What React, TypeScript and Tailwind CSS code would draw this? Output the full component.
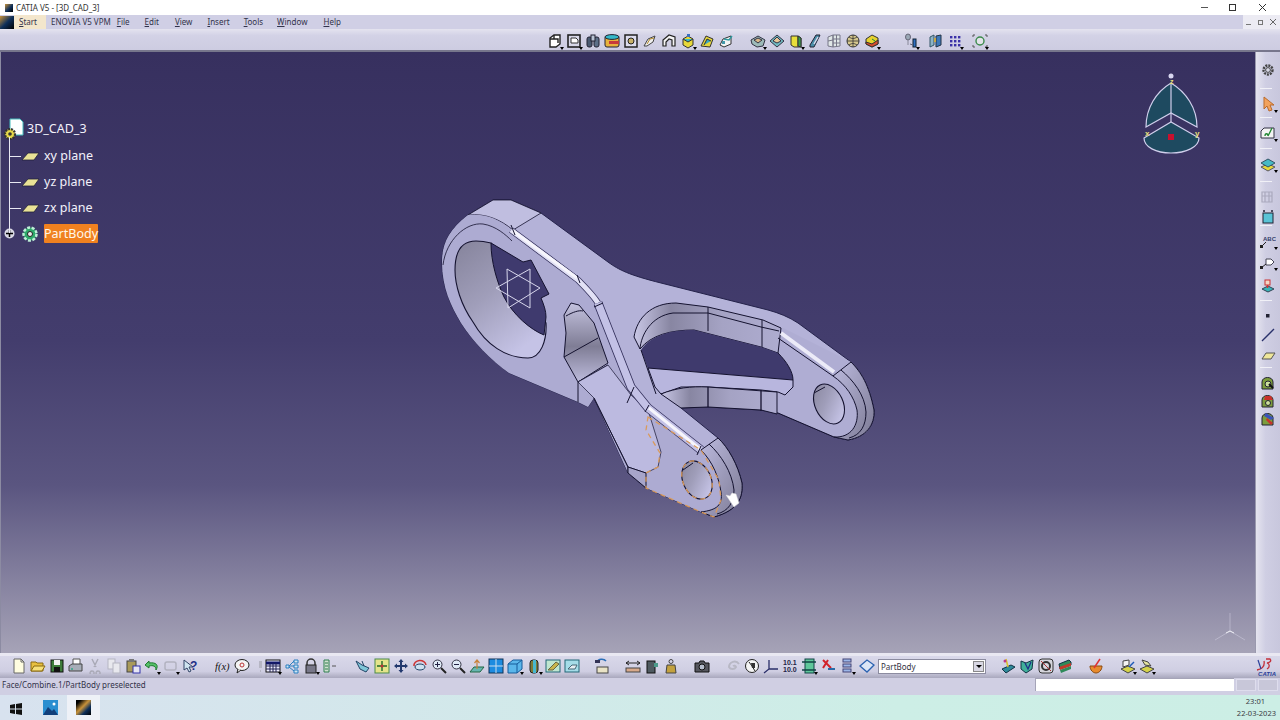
import type { ReactNode } from 'react'

const ui = { fontFamily: '"Noto Sans", "Open Sans", sans-serif' }

const icons: Record<string, ReactNode> = {
  pad: <><path d="M3 5l4-3h6v9l-4 3H3z" fill="#fff" stroke="#222" strokeWidth="1.4"/><path d="M7 2v4H3M7 6l4 0v4" fill="none" stroke="#222" strokeWidth="1.4"/></>,
  pocket: <><rect x="2" y="2" width="12" height="12" fill="#d8d8e8" stroke="#222" strokeWidth="1.6"/><path d="M5 5h5l2 2v3H5z" fill="#fff" stroke="#333"/></>,
  shaft: <><rect x="2" y="4" width="5" height="10" rx="2" fill="#4a5a70" stroke="#223"/><rect x="9" y="4" width="5" height="10" rx="2" fill="#5d7088" stroke="#223"/><rect x="6" y="2" width="4" height="6" fill="#b9c4d4" stroke="#223"/></>,
  groove: <><rect x="1" y="3" width="14" height="11" rx="2" fill="#e8b23c" stroke="#223"/><ellipse cx="8" cy="4" rx="7" ry="2.4" fill="#35b8c8" stroke="#223"/><path d="M5 8h10v3H5z" fill="#c73a3a"/></>,
  hole: <><rect x="2" y="2" width="12" height="12" fill="#dde" stroke="#222" strokeWidth="1.5"/><circle cx="8" cy="8" r="3" fill="#c9b26a" stroke="#222"/></>,
  rib: <><path d="M2 13l4-7 7-3-2 6-6 4z" fill="#eee" stroke="#444"/><path d="M5 11l3-5 4-1" fill="none" stroke="#b38b2a"/></>,
  slot: <><path d="M2 13V7l6-5 6 2v9h-3V7L8 6 5 9v4z" fill="#f4f4f4" stroke="#222" strokeWidth="1.2"/></>,
  multi: <><path d="M3 6l5-3 5 3v6l-5 3-5-3z" fill="#e7d83a" stroke="#333"/><path d="M3 6l5 3 5-3" fill="#37b8c4" stroke="#333"/><rect x="7" y="1" width="3" height="3" fill="#3a70c0"/></>,
  loft: <><path d="M2 13L7 3l7 3-3 8z" fill="#e6d63b" stroke="#333"/><path d="M5 12l3-6 4 2" fill="#38a8c0" stroke="#333"/></>,
  solid: <><path d="M2 12l3-6 8-3v8l-7 3z" fill="#f4f4f4" stroke="#333"/><path d="M6 6l5 1 3-4" fill="none" stroke="#2f9aa0" strokeWidth="1.4"/><rect x="4" y="8" width="3" height="3" fill="#49a"/></>,
  edge: <><path d="M1 7l7-4 7 4-2 6-6 1-5-3z" fill="#9dbab8" stroke="#334"/><path d="M4 7l4-2 4 2-4 3z" fill="#d9b98a" stroke="#334"/></>,
  face: <><path d="M1 8l7-6 7 6-7 6z" fill="#6fb8c0" stroke="#334"/><path d="M4 8l4-4 4 4-4 2z" fill="#e6c79a" stroke="#334"/></>,
  thick: <><path d="M3 3h7l3 2v9H6l-3-2z" fill="#e7de3a" stroke="#333"/><path d="M10 3v11" stroke="#333"/><path d="M10 3l3 2v9l-3-1z" fill="#3a9c4a" stroke="#333"/></>,
  shell: <><path d="M3 12L9 2h4l-6 12H3z" fill="#4a8ea8" stroke="#223"/><path d="M7 11l4-7" stroke="#dde" strokeWidth="1.4"/></>,
  grid3: <><path d="M2 4l5-2v12l-5-1zM7 2h7v11l-7 1z" fill="#dfe6e6" stroke="#778"/><path d="M7 6h7M7 10h7M10.500 2v11M2 8l5-1" stroke="#778" fill="none"/></>,
  sphere: <><circle cx="8" cy="8" r="6" fill="#d7c98d" stroke="#333"/><path d="M2 8h12M8 2v12M4 4c3 2 5 2 8 0M4 12c3-2 5-2 8 0" stroke="#333" fill="none" strokeWidth=".8"/></>,
  box: <><path d="M2 6l6-4 6 3v6l-6 3-6-3z" fill="#e6d12e" stroke="#333"/><path d="M2 9l6 2 6-4v4l-6 3-6-3z" fill="#d94c2c" stroke="#333"/><path d="M8 6l3 2" stroke="#1c8a3c"/></>,
  analyze: <><ellipse cx="5" cy="4" rx="2.500" ry="3" fill="#9aa8b5" stroke="#667"/><path d="M5 7v5" stroke="#889"/><rect x="10" y="6" width="3" height="8" fill="#2f6fc0" stroke="#123"/><path d="M7 11l3 1" stroke="#667"/></>,
  book: <><path d="M2 4l4-2v10l-4 2z" fill="#8db4c7" stroke="#356"/><path d="M8 3l5-1v10l-5 2z" fill="#3e78b8" stroke="#234"/><path d="M6 5h2v4H6z" fill="#c9a642"/></>,
  dots: <><g fill="#3b32a8">{[2, 6, 10].map(y => [2, 6, 10].map(x => <rect key={`${x}-${y}`} x={x + 1} y={y + 1} width="2.400" height="2.400"/>))}</g></>,
  target: <><path d="M3 2H1v2M13 2h2v2M3 14H1v-2M13 14h2v-2" fill="none" stroke="#555"/><circle cx="8" cy="8" r="4" fill="#e3e3ea" stroke="#3a8a4a" strokeWidth="1.4"/></>,
  gear: <><circle cx="8" cy="8" r="4.500" fill="none" stroke="#444" strokeWidth="2.400" strokeDasharray="2 1"/><circle cx="8" cy="8" r="2.400" fill="#d8d8e6" stroke="#444"/></>,
  cursor: <path d="M4 1v12l3-3 2 5 3-1-2-5h4z" fill="#f2a25c" stroke="#b96a2c"/>,
  sketch: <><path d="M1 6l3-3h10v10H1z" fill="#f4f4f4" stroke="#334"/><path d="M5 11c0-3 3-3 3 0M8 11l4-8" fill="none" stroke="#283" strokeWidth="1.300"/></>,
  layers: <><path d="M1 11l7-3 7 3-7 4z" fill="#e7d83a" stroke="#556"/><path d="M1 7l7-4 7 4-7 4z" fill="#47bac6" stroke="#356"/></>,
  ghost: <path d="M2 3h10v10H2zM5 3v10M2 7h10M9 3v10" fill="none" stroke="#aaa9bd" strokeWidth="1.200"/>,
  card: <><rect x="3" y="4" width="10" height="10" fill="#59c3d6" stroke="#223"/><path d="M3 2h2M11 2h2" stroke="#223" strokeWidth="1.400"/></>,
  abc: <><text x="3" y="8" fontSize="6" fontWeight="700" fill="#33406a" fontFamily="Liberation Sans">ABC</text><path d="M1 14l5-5" stroke="#222"/><rect x="0" y="12" width="3" height="3" fill="#222"/></>,
  tag: <><path d="M6 5h5l3 3-3 3H6z" fill="#fff" stroke="#445"/><path d="M1 14l5-4" stroke="#222"/><rect x="0" y="12" width="3" height="3" fill="#222"/></>,
  stamp: <><path d="M2 11l6-3 6 3-6 3z" fill="#39b4b8" stroke="#345"/><rect x="5" y="2" width="5" height="5" fill="#f3d7c6" stroke="#c33"/><path d="M7.500 7v3" stroke="#c33" strokeWidth="1.500"/></>,
  point: <rect x="6" y="6" width="3.500" height="3.500" fill="#223"/>,
  line: <path d="M2 14L14 2" stroke="#29306a" strokeWidth="1.300"/>,
  plane: <path d="M2 13l4-6h9l-4 6z" fill="#eee69a" stroke="#555"/>,
  wiz1: <><path d="M2 7c0-6 11-6 11 0v7H2z" fill="#7c9c3c" stroke="#223"/><circle cx="8" cy="9" r="3" fill="#cde09c" stroke="#223"/><path d="M9 9l4 4" stroke="#111" strokeWidth="2"/></>,
  wiz2: <><path d="M2 7c0-6 11-6 11 0v7H2z" fill="#7c9c3c" stroke="#223"/><path d="M5 3h6l2 4H4z" fill="#c8322c"/><circle cx="8" cy="10" r="2.500" fill="#cde09c" stroke="#223"/></>,
  wiz3: <><path d="M2 7c0-6 11-6 11 0v7H2z" fill="#7c9c3c" stroke="#223"/><path d="M6 2l8 5-3 2-7-4z" fill="#3b53b8"/><path d="M7 7l6 5-2 2-5-5z" fill="#c8322c"/></>,
  newf: <><path d="M3 1h7l3 3v11H3z" fill="#fffde0" stroke="#666"/><path d="M10 1v3h3" fill="none" stroke="#666"/></>,
  open: <><path d="M1 13V4h5l1 1h6v8z" fill="#e8c040" stroke="#8a6a10"/><path d="M1 13l3-5h11l-3 5z" fill="#f6e07a" stroke="#8a6a10"/></>,
  save: <><rect x="2" y="2" width="12" height="12" fill="#3d7c3a" stroke="#111"/><rect x="5" y="2" width="6" height="5" fill="#f1f1f1"/><rect x="5" y="9" width="6" height="5" fill="#111"/></>,
  print: <><path d="M5 1h7v6H5z" fill="#fff" stroke="#555"/><path d="M1 8l3-2h10v7H1z" fill="#a7adb8" stroke="#444"/><circle cx="4" cy="11" r="1" fill="#3a8"/></>,
  cut: <path d="M5 1l4 8M11 1L7 9M5 13a2 2 0 1 0 .1 0M11 13a2 2 0 1 0 .1 0" stroke="#a9a9b6" fill="none" strokeWidth="1.400"/>,
  copy: <><rect x="2" y="1" width="7" height="10" fill="#e8e8ee" stroke="#b5b5c2"/><rect x="7" y="5" width="7" height="10" fill="#e8e8ee" stroke="#b5b5c2"/></>,
  paste: <><rect x="2" y="3" width="9" height="11" fill="#a99a5a" stroke="#444"/><rect x="4" y="1" width="5" height="3" fill="#777"/><rect x="8" y="8" width="7" height="7" fill="#e6e6f4" stroke="#33a"/></>,
  undo: <path d="M5 3L1 7l4 3V8c4-1 7 0 7 4 3-5 0-8-7-7z" fill="#55c06a" stroke="#1e7a30"/>,
  redo: <rect x="2" y="4" width="11" height="8" rx="2" fill="none" stroke="#b2b2c0" strokeWidth="1.500"/>,
  help: <><path d="M2 2v10l3-2 2 4 2-1-2-4h4z" fill="#cfe4f0" stroke="#346"/><text x="8" y="12" fontSize="12" fontWeight="700" fill="#1d2f88" fontFamily="Liberation Sans">?</text></>,
  fx: <text x="0" y="12" fontSize="10.500" fontFamily="Liberation Serif" fontStyle="italic" fill="#111">f(x)</text>,
  bubble: <><ellipse cx="8" cy="7" rx="7" ry="5.500" fill="#f4f4f4" stroke="#222"/><path d="M4 11l-1 4 4-3" fill="#f4f4f4" stroke="#222"/><circle cx="8" cy="7" r="2" fill="none" stroke="#b33"/></>,
  bulb: <path d="M6 3h3v7H6zM7 12h1v2H7z" fill="#b6b6c4"/>,
  table: <><rect x="1" y="2" width="14" height="12" fill="#eef" stroke="#111"/><path d="M1 5h14" stroke="#11166a" strokeWidth="3"/><path d="M1 8h14M1 11h14M5 5v9M8 5v9M11 5v9" stroke="#225"/></>,
  tree: <path d="M2 7h3v3H2zM10 2h4v3h-4zM10 7h4v3h-4zM10 12h4v3h-4zM5 8l5-5M5 8h5M5 9l5 4" fill="#cfe6f3" stroke="#2a7fc0"/>,
  lock: <><path d="M4 7V5a4 4 0 0 1 8 0v2" fill="none" stroke="#333" strokeWidth="1.500"/><rect x="3" y="7" width="10" height="8" fill="#778" stroke="#222"/></>,
  param: <><path d="M2 2h5v12H2z" fill="#cfe0cf" stroke="#2f7f4f"/><path d="M3 5h3M3 8h3M3 11h3" stroke="#2f7f4f"/><path d="M10 8h4" stroke="#555"/></>,
  fly: <><path d="M1 3l6 4 7 3-3 4-6-3z" fill="#7fc6d8" stroke="#246"/><path d="M7 3l2 5" stroke="#246"/></>,
  fit: <><rect x="1" y="1" width="14" height="14" fill="#e4e48a" stroke="#4a8a4a"/><path d="M8 3v10M3 8h10" stroke="#1f6a2a" strokeWidth="1.400"/><circle cx="8" cy="8" r="1.500" fill="#b33"/></>,
  pan: <path d="M8 1l2.500 3H9v3h3V5.500L15 8l-3 2.500V9H9v3h1.500L8 15l-2.500-3H7V9H4v1.500L1 8l3-2.500V7h3V4H5.500z" fill="#23396e"/>,
  rotate: <><path d="M2 8a6 5 0 0 1 12-1" fill="none" stroke="#c33" strokeWidth="1.500"/><ellipse cx="8" cy="9" rx="5" ry="3" fill="#cfe2f2" stroke="#246"/></>,
  zin: <><circle cx="6.500" cy="6.500" r="4.500" fill="#dfeaf6" stroke="#334"/><path d="M10 10l5 5" stroke="#222" strokeWidth="2"/><path d="M4 6.500h5M6.500 4v5" stroke="#224"/></>,
  zout: <><circle cx="6.500" cy="6.500" r="4.500" fill="#dfeaf6" stroke="#334"/><path d="M10 10l5 5" stroke="#222" strokeWidth="2"/><path d="M4 6.500h5" stroke="#224"/></>,
  normal: <><path d="M1 14l4-5h10l-4 5z" fill="#67b6b0" stroke="#264"/><path d="M8 11V2M5.500 5L8 2l2.500 3" fill="none" stroke="#c8823a" strokeWidth="1.200"/></>,
  quad: <><rect x="1" y="1" width="14" height="14" fill="#1d8be0" stroke="#135"/><path d="M8 1v14M1 8h14" stroke="#cde"/></>,
  cube: <><path d="M1 6l5-4h9v9l-5 4H1z" fill="#5ab6ea" stroke="#155b9a"/><path d="M1 6h9v9M10 6l5-4" fill="none" stroke="#155b9a"/></>,
  shade: <><rect x="4" y="2" width="8" height="13" rx="3" fill="#7d7a3a" stroke="#222"/><rect x="7" y="2" width="3" height="13" fill="#47b8d0"/></>,
  sq1: <><rect x="1" y="2" width="14" height="12" fill="#bfe6d0" stroke="#267"/><path d="M3 12l8-8 3 2-6 6z" fill="#c8b44a" stroke="#664"/></>,
  sq2: <><rect x="1" y="2" width="14" height="12" fill="#a5dce8" stroke="#267"/><path d="M4 11l4-4h5l-2 4z" fill="#e6eef2" stroke="#467"/></>,
  swap: <><path d="M3 4a5 4 0 0 1 9-1" fill="none" stroke="#2b6fb8" strokeWidth="1.500"/><rect x="1" y="2" width="5" height="3" fill="#335"/><rect x="3" y="9" width="11" height="6" fill="#e9e3c6" stroke="#444"/></>,
  measure: <><path d="M1 5h14M1 5l3-2M1 5l3 2M15 5l-3-2M15 5l-3 2" fill="none" stroke="#222"/><rect x="1" y="10" width="14" height="4" fill="#d8a98a" stroke="#444"/></>,
  inertia: <><rect x="3" y="3" width="8" height="12" fill="#4f5a60" stroke="#111"/><rect x="10" y="5" width="4" height="4" fill="#4b9a8a"/></>,
  mass: <><circle cx="8" cy="3.500" r="2" fill="none" stroke="#444"/><path d="M4 7h8l1 8H3z" fill="#c3a13e" stroke="#444"/></>,
  camera: <><path d="M1 5h4l1-2h4l1 2h4v9H1z" fill="#55565e" stroke="#111"/><circle cx="8" cy="9" r="3" fill="#b5bccb" stroke="#111"/></>,
  spiral: <path d="M8 8a2 2 0 0 1 3 1 4 4 0 0 1-7 0 5.500 5.500 0 0 1 10-3" fill="none" stroke="#b8b8c5" strokeWidth="2"/>,
  globe: <><circle cx="8" cy="8" r="6.500" fill="#f4f4f4" stroke="#222"/><path d="M5 4l3 4 3 5" fill="none" stroke="#222"/><path d="M7 5h4v5H8z" fill="#333"/></>,
  axis: <path d="M6 2v9l-5 4M6 11h9" fill="none" stroke="#2a2f6a" strokeWidth="1.300"/>,
  nums: <text x="1" y="7" fontSize="7" fontWeight="700" fontFamily="Liberation Sans" fill="#224">10.1<tspan x="1" y="14">10.0</tspan></text>,
  frame: <><rect x="4" y="1" width="9" height="14" fill="#5fc79b" stroke="#144"/><path d="M1 4h14M1 12h14" stroke="#144" strokeWidth="1.400"/></>,
  redx: <><path d="M3 2l8 8M8 2L3 10" stroke="#d2222a" strokeWidth="2"/><path d="M8 11h7" stroke="#2a6aa8" strokeWidth="2"/></>,
  stack: <><rect x="4" y="1" width="8" height="3" fill="#9bb6e8" stroke="#447"/><rect x="4" y="6" width="8" height="3" fill="#9bb6e8" stroke="#447"/><rect x="4" y="11" width="8" height="3" fill="#9bb6e8" stroke="#447"/></>,
  diamond: <path d="M1 8l7-6 7 5-7 7z" fill="#dbe6f6" stroke="#2b62b0" strokeWidth="1.300"/>,
  tool1: <><path d="M2 11l9-4 4 2-9 6z" fill="#2f8a9a" stroke="#134"/><path d="M6 1l2 8" stroke="#d9c22a" strokeWidth="1.500"/><circle cx="5" cy="3" r="1.500" fill="#c03a8a"/></>,
  tool2: <><path d="M2 3l5 2 7-3-1 9-6 4-5-4z" fill="#3faf9a" stroke="#134"/><path d="M6 5l3 6 3-7" fill="none" stroke="#1d2f88" strokeWidth="1.300"/></>,
  tool3: <><rect x="1" y="1" width="14" height="14" rx="3" fill="#d5d5dc" stroke="#333"/><circle cx="8" cy="8" r="4" fill="none" stroke="#333" strokeWidth="2"/><path d="M3 3l10 10" stroke="#a33"/></>,
  tool4: <><path d="M2 6l10-4 2 2v3L3 11z" fill="#2f8a5a" stroke="#134"/><path d="M2 9l12-4v3L3 12z" fill="#c03a2a"/><path d="M3 12l11-4v3L4 15z" fill="#2f8a5a"/></>,
  bowl: <><path d="M2 8h12c0 4-3 7-6 7s-6-3-6-7z" fill="#e88a2c" stroke="#8a4a10"/><path d="M6 10l6-9" stroke="#d33" strokeWidth="1.500"/></>,
  cad1: <><path d="M1 11l7-3 7 3-7 4z" fill="#d4d24a" stroke="#444"/><path d="M3 9V3l6-1v5z" fill="#f4f4f4" stroke="#444"/><path d="M9 9l5-5" stroke="#1d5ab8" strokeWidth="1.500"/></>,
  cad2: <><path d="M1 11l7-3 7 3-7 4z" fill="#d4d24a" stroke="#444"/><path d="M3 2l6 2 3 4-6-1z" fill="#e4e4a0" stroke="#444"/></>,
}

type Item = { n: string; arrow?: boolean; gap?: string }

function Btn({ n, arrow, gap = '' }: Item) {
  return (
    <div className={`relative w-[19px] h-[18px] shrink-0 flex items-center justify-center ${gap}`}>
      <svg width="16" height="16" viewBox="0 0 16 16">{icons[n]}</svg>
      {arrow && <span className="absolute right-[0px] bottom-[0px] w-0 h-0 border-x-[2.5px] border-x-transparent border-t-[3px] border-t-black" />}
    </div>
  )
}

const topBar: Item[] = [
  { n: 'pad', arrow: true }, { n: 'pocket', arrow: true }, { n: 'shaft' }, { n: 'groove' }, { n: 'hole' }, { n: 'rib' }, { n: 'slot' }, { n: 'multi', arrow: true }, { n: 'loft' }, { n: 'solid' },
  { n: 'edge', arrow: true, gap: 'ml-[13px]' }, { n: 'face' }, { n: 'thick', arrow: true }, { n: 'shell' }, { n: 'grid3' }, { n: 'sphere' }, { n: 'box', arrow: true },
  { n: 'analyze', arrow: true, gap: 'ml-[20px]' }, { n: 'book', gap: 'ml-[6px]' }, { n: 'dots', arrow: true }, { n: 'target', arrow: true, gap: 'ml-[6px]' },
]

const bottomBar: Item[] = [
  { n: 'newf' }, { n: 'open' }, { n: 'save' }, { n: 'print' }, { n: 'cut' }, { n: 'copy' }, { n: 'paste' }, { n: 'undo', arrow: true }, { n: 'redo', arrow: true }, { n: 'help' },
  { n: 'fx', gap: 'ml-[14px]' }, { n: 'bubble' }, { n: 'bulb' }, { n: 'table', arrow: true, gap: 'ml-[-7px]' }, { n: 'tree' }, { n: 'lock', arrow: true }, { n: 'param' },
  { n: 'fly', gap: 'ml-[14px]' }, { n: 'fit' }, { n: 'pan' }, { n: 'rotate' }, { n: 'zin' }, { n: 'zout' }, { n: 'normal' }, { n: 'quad' }, { n: 'cube', arrow: true }, { n: 'shade', arrow: true }, { n: 'sq1' }, { n: 'sq2' },
  { n: 'swap', gap: 'ml-[11px]' }, { n: 'measure', gap: 'ml-[12px]' }, { n: 'inertia' }, { n: 'mass' }, { n: 'camera', gap: 'ml-[12px]' },
  { n: 'spiral', gap: 'ml-[12px]' }, { n: 'globe' }, { n: 'axis' }, { n: 'nums' }, { n: 'frame', arrow: true }, { n: 'redx' }, { n: 'stack', arrow: true },
]

const rightBar: { n: string; mt: string; arrow?: boolean; sep?: boolean }[] = [
  { n: 'gear', mt: 'mt-[9px]' }, { n: 'cursor', mt: 'mt-[16px]', arrow: true, sep: true }, { n: 'sketch', mt: 'mt-[11px]', arrow: true, sep: true },
  { n: 'layers', mt: 'mt-[13px]', arrow: true, sep: true }, { n: 'ghost', mt: 'mt-[15px]', sep: true }, { n: 'card', mt: 'mt-[2px]' },
  { n: 'abc', mt: 'mt-[6px]', arrow: true, sep: true }, { n: 'tag', mt: 'mt-[3px]', arrow: true }, { n: 'stamp', mt: 'mt-[6px]' },
  { n: 'point', mt: 'mt-[12px]', sep: true }, { n: 'line', mt: 'mt-[1px]' }, { n: 'plane', mt: 'mt-[1px]' },
  { n: 'wiz1', mt: 'mt-[11px]', sep: true }, { n: 'wiz2', mt: 'mt-[0px]' }, { n: 'wiz3', mt: 'mt-[0px]' },
]

function Gizmo() {
  return (
    <svg className="absolute right-[52px] top-[18px]" width="62" height="88" viewBox="1141 70 62 88">
      <g stroke="#d0cfec" strokeWidth="1.200">
        <path d="M1171 83C1156 92 1146 108 1146 127L1171 113L1197 127C1197 108 1186 92 1171 83Z" fill="#1e4a60" />
        <path d="M1144 138L1171 122L1199 138C1199 147 1186 153 1171 153C1156 153 1144 147 1144 138Z" fill="#1e4a60" />
        <path d="M1171 83V122" fill="none" />
      </g>
      <circle cx="1171" cy="76" r="2.500" fill="#d8d7f0" />
      <rect x="1168" y="134" width="6" height="6" fill="#c8102e" />
      <text x="1170" y="84" fontSize="7" fontWeight="700" fill="#e8e07a" fontFamily="Liberation Sans">z</text>
      <text x="1145" y="136" fontSize="8" fontWeight="700" fill="#e8e07a" fontFamily="Liberation Sans">x</text>
      <text x="1195" y="136" fontSize="8" fontWeight="700" fill="#e8e07a" fontFamily="Liberation Sans">y</text>
    </svg>
  )
}

const ink = '#14122f'
const flank = 'M700 512L645 488L627 473L593 398L587 407L577 402L508 373C490 360 472 342 460 323C450 306 441 288 441 262'

function Part() {
  return (
    <svg className="absolute left-0 top-0" width="1255" height="600" viewBox="0 52 1255 600">
      <defs>
        <linearGradient id="hole" x1="0" y1="0" x2="0.6" y2="1">
          <stop offset="0" stopColor="#85839b" /><stop offset="0.5" stopColor="#a09eba" /><stop offset="1" stopColor="#c5c3e6" />
        </linearGradient>
        <linearGradient id="pocket" x1="0" y1="0" x2="0" y2="1">
          <stop offset="0" stopColor="#c4c2df" /><stop offset="0.55" stopColor="#7f7d95" /><stop offset="1" stopColor="#bdbbdc" />
        </linearGradient>
        <linearGradient id="wall" x1="0" y1="0" x2="1" y2="0">
          <stop offset="0" stopColor="#c9c7e6" /><stop offset="0.25" stopColor="#8886a2" /><stop offset="0.6" stopColor="#a5a3c4" /><stop offset="1" stopColor="#aeacd0" />
        </linearGradient>
        <linearGradient id="end" x1="0" y1="0" x2="1" y2="1">
          <stop offset="0" stopColor="#bcbade" /><stop offset="1" stopColor="#7c7a94" />
        </linearGradient>
      </defs>
      {/* body */}
      <path
        d={`M441 262C441 245 447 230 467 215L492 200H510L540 213L607 262C618 270 628 275 660 283L767 310C778 313 788 317 797 323L850 362C860 372 868 385 873 410C874 425 865 437 847 440L833 437L777 413L760 410L707 407L680 408L717 438C727 447 737 465 741 483C742 497 738 510 713 517L${flank.slice(1)}Z`}
        fill="#b4b2d8" stroke="#24224a" strokeWidth="1"
      />
      <path d="M467 215L492 200H510L540 213L512 230C500 220 485 213 467 215Z" fill="#c0bee0" stroke={ink} strokeWidth=".8" />
      <path d={`M441 262C441 245 447 230 467 215C485 213 500 220 510 230L577 280C585 288 592 295 597 303L630 387L647 408L700 450L718 480L720 500L713 517L${flank.slice(1)}Z`} fill="#adabd2" />
      <path d="M442 265C445 240 465 222 482 224C495 226 505 235 511 241" fill="none" stroke={ink} strokeWidth=".8" />
      {/* big bore */}
      <path d="M454 270C454 250 462 241 475 241C480 241 486 242 490 243L545 323C546 340 540 358 527 358C505 358 485 345 472 322C460 305 454 285 454 270Z" fill="url(#hole)" stroke={ink} strokeWidth="1.100" />
      <path d="M490 243L522 262L530 260L548 294L540 298C543 305 545 311 545 317L543 335C530 330 512 315 503 297C496 282 490 262 490 243Z" fill="#3f3a6e" stroke={ink} />
      <g fill="none" stroke="#d8d7ec" strokeWidth="1">
        <path d="M506 269L539 288L507 308Z" />
        <path d="M529 269L495 288L529 308Z" />
      </g>
      {/* pocket */}
      <path d="M563 315L570 303L578 305L593 323L607 363L577 382L563 357L565 333Z" fill="url(#pocket)" stroke={ink} />
      <path d="M563 357L597 338M577 382L607 365M565 316C572 312 578 310 582 311" fill="none" stroke={ink} />
      {/* web of the lower arm */}
      <path d="M577 382L607 365L630 395L647 410L660 452L657 467L645 473L627 467L593 398Z" fill="#bcbae0" stroke={ink} strokeWidth=".7" />
      <path d="M577 402V382M593 398L627 467V473" fill="none" stroke={ink} />
      <path d="M627 467L645 473V488L627 473Z" fill="#a7a5ca" stroke={ink} />
      {/* right boss, under the window */}
      <path d="M777 330L782 328L850 362C860 372 868 385 873 410C874 425 865 437 847 440L833 437L777 413Z" fill="#afadd3" />
      <path d="M832 376L850 362C860 372 868 385 873 410C874 425 865 437 847 440L833 437C850 438 858 425 856 410C853 397 845 385 832 376Z" fill="url(#end)" stroke={ink} />
      <path d="M840 370C852 380 864 395 865 412C865 425 860 435 848 438" fill="none" stroke={ink} />
      <ellipse cx="828" cy="404" rx="14" ry="21" transform="rotate(-25 828 404)" fill="url(#hole)" stroke={ink} strokeWidth="1.100" />
      <path d="M813 393L824 387" fill="none" stroke={ink} />
      <path d="M777 413L833 437" stroke={ink} />
      {/* upper window wall */}
      <path d="M633 337C636 318 650 303 675 303L707 307L762 320L780 328L777 353L760 347L693 330C670 330 650 335 639 349Z" fill="url(#wall)" stroke={ink} />
      <path d="M639 349C640 335 650 316 672 313L707 313L760 327L778 331M707 307V331M761 320V347" fill="none" stroke={ink} />
      {/* window */}
      <path d="M640 350C650 335 670 330 693 330L760 347L777 353C786 362 792 372 792 380L647 369Z" fill="#3f3a6d" />
      <path d="M777 353C786 362 792 372 792 380" fill="none" stroke={ink} />
      {/* rib through window */}
      <path d="M647 368L792 380V387L784 395L777 392L760 390L707 387L680 387L660 394L654 387Z" fill="#b8b6de" stroke={ink} />
      <path d="M660 394C675 388 690 386 707 387L776 392V414L760 410L707 407L680 408Z" fill="url(#wall)" stroke={ink} />
      <path d="M707 387V407M760 390V411" fill="none" stroke={ink} strokeWidth="1.300" />
      <path d="M640 350L655 394" fill="none" stroke={ink} />
      {/* fillets along the upper edge */}
      <path d="M510 230L577 280C585 288 592 295 597 303" fill="none" stroke="#34315c" strokeWidth="6.500" strokeLinejoin="round" />
      <path d="M510 230L577 280C585 288 592 295 597 303" fill="none" stroke="#e2e1f6" strokeWidth="5" strokeLinejoin="round" />
      <path d="M597 303L630 387L647 408L700 450" fill="none" stroke="#34315c" strokeWidth="9" strokeLinejoin="round" />
      <path d="M597 303L630 387L647 408L700 450" fill="none" stroke="#c3c1e6" strokeWidth="7.500" strokeLinejoin="round" />
      <path d="M512 231L576 278M648 408L699 449" fill="none" stroke="#f6f5fc" strokeWidth="3" />
      <path d="M780 333L833 372" fill="none" stroke="#ecebf8" strokeWidth="4" />
      <path d="M777 338L832 376" fill="none" stroke={ink} />
      <path d="M510 225L514 235M576 275L579 283M593 307L602 303M626 403L633 387M644 412L648 405M696 455L700 446" stroke={ink} />
      {/* lower boss */}
      <path d="M700 450L717 438C727 447 737 465 741 483C742 497 738 510 713 517L700 512C716 510 722 505 720 492C718 478 712 462 700 450Z" fill="url(#end)" stroke={ink} />
      <path d="M708 444C720 455 731 472 733 490C733 503 727 511 716 514" fill="none" stroke={ink} />
      <ellipse cx="696" cy="480" rx="14" ry="20" transform="rotate(-25 696 480)" fill="url(#hole)" stroke={ink} strokeWidth="1.100" />
      <path d="M682 470L692 463" fill="none" stroke={ink} />
      {/* preselected outline */}
      <g fill="none" strokeDasharray="5 4" strokeWidth="1.300">
        <path d="M647 417L700 450L718 480L720 500L713 517L700 512L645 488V473L657 467L659 453L645 430Z" stroke="#d99a5c" />
        <ellipse cx="696" cy="480" rx="14" ry="20" transform="rotate(-25 696 480)" stroke="#d99a5c" />
      </g>
      {/* cursor */}
      <path d="M725 495L729 496L731 493L735 494L738 503L733 507L729 501Z" fill="#fff" stroke="#ddd" strokeWidth=".5" strokeLinejoin="round" />
    </svg>
  )
}

function Tree() {
  const planes = ['xy plane', 'yz plane', 'zx plane']
  return (
    <div className="absolute left-0 top-[63px] text-[12.5px] leading-[26px] text-[#f2f1fa]" style={ui}>
      <div className="absolute left-[8px] top-[22px] w-[1px] h-[96px] bg-[#e8e8f2]" />
      <div className="flex items-center h-[28px] pb-[1px]">
        <svg width="24" height="24" viewBox="0 0 24 24">
          <path d="M9 2h10l3 3v13H9z" fill="#fff" stroke="#4bb" />
          <circle cx="9" cy="17" r="5" fill="#e6d84a" stroke="#333" strokeWidth="2.200" strokeDasharray="2 1" />
          <circle cx="9" cy="17" r="1.800" fill="#333" />
        </svg>
        <span className="ml-[2px]">3D_CAD_3</span>
      </div>
      {planes.map(p => (
        <div key={p} className="flex items-center h-[26px] pl-[8px]">
          <span className="w-[12px] h-[1px] bg-[#e8e8f2]" />
          <svg width="19" height="10" viewBox="0 0 19 10"><path d="M1 9L7 2H18L13 9Z" fill="#e9e296" stroke="#22223a" strokeWidth=".8" /></svg>
          <span className="ml-[4px]">{p}</span>
        </div>
      ))}
      <div className="flex items-center h-[25px] pl-[3px]">
        <svg width="11" height="11" viewBox="0 0 11 11">
          <circle cx="5.500" cy="5.500" r="5" fill="#d9d9e4" />
          <path d="M5.500 2v7M2 5.500h7" stroke="#000" strokeWidth="1.500" />
        </svg>
        <svg className="ml-[6px]" width="18" height="18" viewBox="0 0 18 18">
          <circle cx="9" cy="9" r="6.500" fill="#2da86a" stroke="#bff0d8" strokeWidth="2.500" strokeDasharray="3 1.500" />
          <circle cx="9" cy="9" r="2.500" fill="#eee" stroke="#222" />
        </svg>
        <span className="ml-[5px] h-[19px] leading-[19px] w-[54px] text-center rounded-[1px] bg-[#f0811f] text-[#fff6ea]">PartBody</span>
      </div>
    </div>
  )
}

export default function App() {
  return (
    <div className="w-[1280px] h-[720px] overflow-hidden flex flex-col bg-[#d2d1e5] text-[#2b2b3a]" style={ui}>
      {/* title bar */}
      <div className="h-[15px] bg-white flex items-center pl-[5px] text-[8px] text-[#333] relative shrink-0">
        <span className="w-[8px] h-[8px] bg-[linear-gradient(135deg,#c9923a,#0e2f5a_55%,#000)]" />
        <span className="ml-[3px]">CATIA V5 - [3D_CAD_3]</span>
        <div className="ml-auto flex items-center h-full text-[#444]">
          <span className="w-[7px] h-[1px] bg-[#555] mr-[21px]" />
          <span className="w-[7px] h-[7px] border border-[#333] mr-[22px]" />
          <svg className="mr-[13px]" width="9" height="9" viewBox="0 0 9 9"><path d="M1 1l7 7M8 1L1 8" stroke="#333" /></svg>
        </div>
      </div>
      {/* menu */}
      <div className="h-[14px] shrink-0 flex items-center text-[8px] bg-[#d0cfe5] text-[#33334a]">
        <span className="w-[14px] h-[13px] bg-[linear-gradient(135deg,#c9923a,#0e2f5a_50%,#000)]" />
        <span className="w-[32px] h-full bg-[#f3e6cc] pl-[5px] leading-[14px]"><u>S</u>tart</span>
        <span className="ml-[5px]">ENOVIA V5 VPM</span>
        <span className="ml-[6px]"><u>F</u>ile</span>
        <span className="ml-[15px]"><u>E</u>dit</span>
        <span className="ml-[16px]"><u>V</u>iew</span>
        <span className="ml-[15px]"><u>I</u>nsert</span>
        <span className="ml-[14px]"><u>T</u>ools</span>
        <span className="ml-[14px]"><u>W</u>indow</span>
        <span className="ml-[16px]"><u>H</u>elp</span>
        <div className="ml-auto w-[37px] h-full bg-[#ecebf3] flex items-center justify-around text-[#777] pr-[1px]">
          <span className="w-[5px] h-[1px] bg-[#777] mt-[4px]" />
          <span className="w-[5px] h-[5px] border border-[#777]" />
          <svg width="6" height="6" viewBox="0 0 6 6"><path d="M0 0l6 6M6 0L0 6" stroke="#666" /></svg>
        </div>
      </div>
      {/* top toolbar */}
      <div className="h-[23px] shrink-0 flex items-center pl-[545px] pt-[2px] bg-[linear-gradient(180deg,#e4e3ef,#d3d2e6_30%,#cdcce1)] border-b-[2px] border-b-[#77768c]">
        {topBar.map((b, i) => <Btn key={i} {...b} />)}
      </div>
      {/* workspace */}
      <div className="h-[601px] shrink-0 flex">
        <div className="relative flex-1 border-l border-l-[#8c8ba2] bg-[linear-gradient(180deg,#37305f_0%,#433d6d_48%,#5a5580_72%,#a6a3b7_100%)]">
          <Tree />
          <Part />
          <Gizmo />
          <svg className="absolute right-[8px] bottom-[10px]" width="34" height="32" viewBox="0 0 34 32">
            <path d="M17 20V2M17 20L2 29M17 20L32 29" stroke="#c9c8da" strokeWidth=".6" fill="none" />
            <path d="M17 20l-4 2M17 20l4 2" stroke="#f0f0f6" />
          </svg>
        </div>
        <div className="w-[25px] flex flex-col items-center bg-[linear-gradient(90deg,#e5e4ef,#cfcee3_40%,#c8c7dd)] border-l border-l-[#9a99ae]">
          {rightBar.map((b, i) => (
            <div key={i} className={`relative ${b.mt}`}>
              {b.sep && <span className="absolute left-[1px] top-[-7px] w-[12px] h-[1px] bg-[#f1f1f7]" />}
              <Btn n={b.n} arrow={b.arrow} />
            </div>
          ))}
        </div>
      </div>
      {/* bottom toolbar */}
      <div className="h-[25px] shrink-0 flex items-end pb-[3px] pl-[9px] relative border-t-[3px] border-t-[#e9e8f2] bg-[linear-gradient(180deg,#d9d8ea,#cfcee2_70%,#a9a8bd)]">
        {bottomBar.map((b, i) => <Btn key={i} {...b} />)}
        <svg className="ml-[3px] mb-[1px]" width="16" height="16" viewBox="0 0 16 16">{icons.diamond}</svg>
        <div className="ml-[3px] mb-[1px] w-[108px] h-[15px] bg-white border border-[#8c8ca0] text-[8px] leading-[13px] pl-[2px] text-[#33333f] relative">
          PartBody
          <span className="absolute right-[1px] top-[1px] w-[11px] h-[11px] bg-[#d9d8e4] border border-[#888] flex items-center justify-center">
            <span className="w-0 h-0 border-x-[3px] border-x-transparent border-t-[3px] border-t-black" />
          </span>
        </div>
        <div className="ml-[12px] flex">
          <Btn n="tool1" /><Btn n="tool2" /><Btn n="tool3" /><Btn n="tool4" />
        </div>
        <div className="ml-[12px]"><Btn n="bowl" /></div>
        <div className="ml-[13px] flex"><Btn n="cad1" arrow /><Btn n="cad2" arrow /></div>
        <div className="absolute right-[4px] bottom-[1px] flex flex-col items-end leading-none">
          <svg width="22" height="13" viewBox="0 0 22 13">
            <path d="M3 12C8 11 11 8 10 3M12 1h4c2 2-1 4-3 4 3 1 3 4 0 6" fill="none" stroke="#c3303a" strokeWidth="1.300" />
            <path d="M4 2l3 9" stroke="#2a3f9a" strokeWidth="1.200" />
          </svg>
          <span className="text-[6px] italic font-bold text-[#2a3f9a]" style={{ fontFamily: '"Liberation Sans", sans-serif' }}>CATIA</span>
        </div>
      </div>
      {/* status */}
      <div className="h-[17px] shrink-0 flex items-center pl-[2px] pb-[4px] bg-[#d0cfe3] text-[8px] text-[#33334a]">
        <span>Face/Combine.1/PartBody preselected</span>
        <div className="ml-auto h-[13px] w-[199px] bg-white border-t border-l border-[#a5a4b8]" />
        <span className="ml-[2px] w-[20px] h-[12px] bg-[#c8c7d9] border border-[#dedded]" />
        <span className="ml-[2px] mr-[2px] w-[20px] h-[12px] bg-[#c8c7d9] border border-[#dedded]" />
      </div>
      {/* taskbar */}
      <div className="flex-1 flex items-stretch bg-[linear-gradient(90deg,#d8e2ef,#cdeee6_70%,#cceee5)]">
        <div className="w-[32px] flex items-center justify-center">
          <svg width="12" height="12" viewBox="0 0 12 12"><path d="M0 2l5-1v4.500H0zM6 .9L12 0v5.500H6zM0 6.500h5V11l-5-1zM6 6.500h6V12l-6-1z" fill="#111" /></svg>
        </div>
        <div className="ml-[5px] w-[27px] flex items-center justify-center border-b-2 border-b-[#1f7fd6]">
          <svg width="15" height="15" viewBox="0 0 15 15"><rect width="15" height="15" fill="#2a8ed0" /><path d="M0 15L5 7l4 4 2-2 4 6z" fill="#123f7a" /><circle cx="11" cy="4" r="1.500" fill="#fff" /></svg>
        </div>
        <div className="ml-[3px] w-[33px] flex items-center justify-center bg-[#eef1f7] border-b-2 border-b-[#1f7fd6]">
          <span className="w-[15px] h-[15px] bg-[linear-gradient(135deg,#000_15%,#c9923a_45%,#0e2f5a_70%,#000)]" />
        </div>
        <div className="ml-auto pr-[4px] pb-[3px] flex flex-col items-end justify-center text-[7.5px] leading-[12px] text-[#3a3a44]">
          <span className="pr-[11px]">23:01</span>
          <span>22-03-2023</span>
        </div>
      </div>
    </div>
  )
}
